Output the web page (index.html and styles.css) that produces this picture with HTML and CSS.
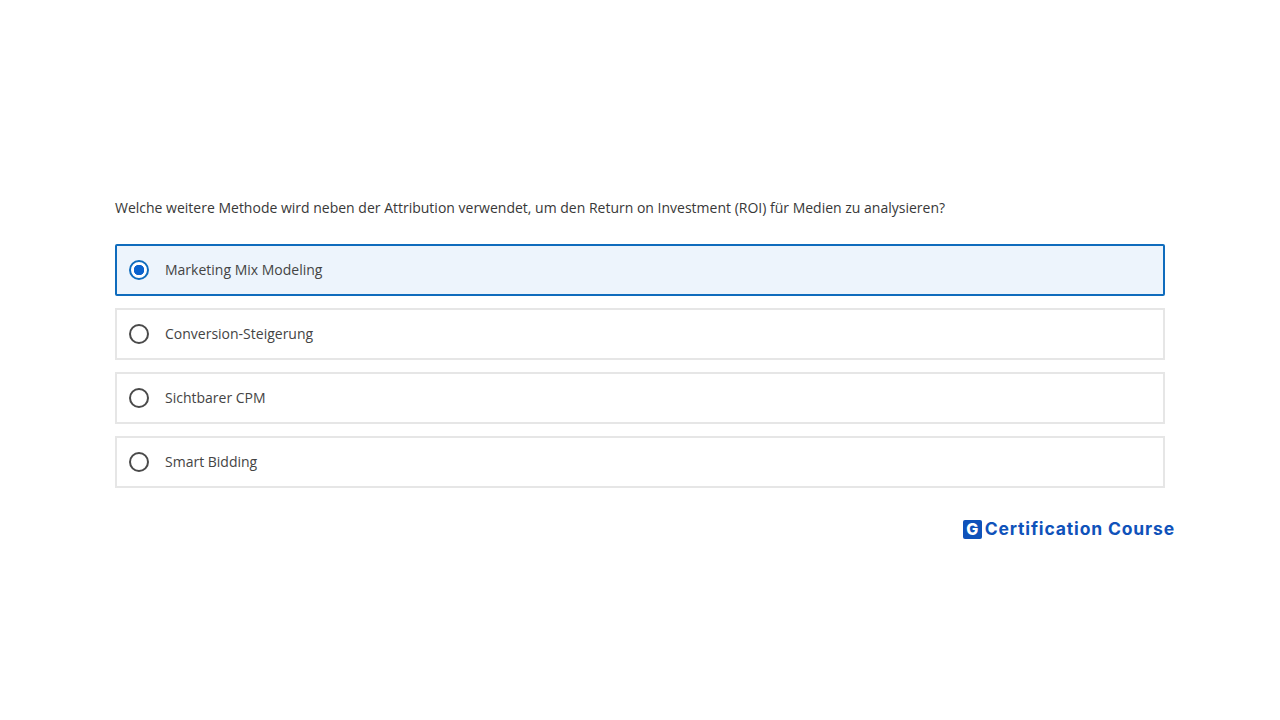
FILE: index.html
```html
<!DOCTYPE html>
<html lang="de">
<head>
  <meta charset="UTF-8" />
  <title>Quiz</title>
  <link rel="stylesheet" href="styles.css">
</head>
<body>

  <main class="quiz">
    <p class="question">Welche weitere Methode wird neben der Attribution verwendet, um den Return on Investment (ROI) für Medien zu analysieren?</p>

    <div class="options">
      <div class="option selected">
        <span class="radio"></span>
        <span class="option-label">Marketing Mix Modeling</span>
      </div>
      <div class="option">
        <span class="radio"></span>
        <span class="option-label">Conversion-Steigerung</span>
      </div>
      <div class="option">
        <span class="radio"></span>
        <span class="option-label">Sichtbarer CPM</span>
      </div>
      <div class="option">
        <span class="radio"></span>
        <span class="option-label">Smart Bidding</span>
      </div>
    </div>

    <div class="brand">
      <span class="brand-icon">G</span>
      <span class="brand-name">Certification Course</span>
    </div>
  </main>

</body>
</html>
```

FILE: styles.css
```css
* {
  margin: 0;
  padding: 0;
  box-sizing: border-box;
}

body {
  height: 100vh;
  background: #fff;
  color: #444;
  font-family: 'Open Sans', sans-serif;
  font-size: 14px;
  overflow: hidden;
}

.quiz {
  width: 1050px;
  margin-left: 115px;
  padding-top: 198px;
}

.question {
  line-height: 20px;
  color: #383838;
  margin-bottom: 26px;
}

.options {
  display: flex;
  flex-direction: column;
  gap: 12px;
}

.option {
  display: flex;
  align-items: center;
  gap: 16px;
  height: 52px;
  padding-left: 12px;
  border: 2px solid #e6e6e6;
}

.option.selected {
  background: #edf4fc;
  border-color: #0f6cbd;
  border-radius: 2px;
}

.option-label {
  line-height: 20px;
}

.radio {
  width: 20px;
  height: 20px;
  border: 2px solid #4a4a4a;
  border-radius: 50%;
}

.selected .radio {
  border-color: #0f6cbd;
  background: radial-gradient(circle, #0b63ce 0, #0b63ce 5px, #fff 5.5px);
}

.brand {
  display: flex;
  align-items: center;
  justify-content: flex-end;
  gap: 3px;
  margin-top: 31px;
  margin-right: -10px;
  color: #0f52ba;
}

.brand-icon {
  width: 19px;
  height: 19px;
  background: #0f52ba;
  border-radius: 2px;
  color: #fff;
  font-family: 'Inter', sans-serif;
  font-weight: 800;
  font-size: 16px;
  line-height: 19px;
  text-align: center;
}

.brand-name {
  font-family: 'Inter', sans-serif;
  font-weight: 700;
  font-size: 17.5px;
  line-height: 20px;
  letter-spacing: 0.85px;
}
```
